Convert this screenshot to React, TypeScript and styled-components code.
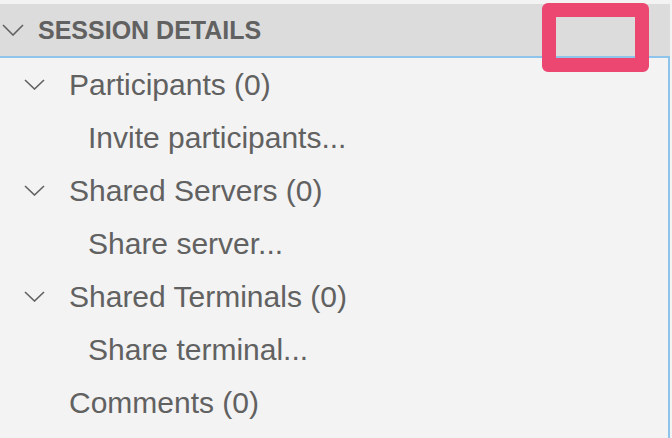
import React from "react";
import styled, { createGlobalStyle } from "styled-components";

const GlobalStyle = createGlobalStyle`
  html, body {
    margin: 0;
    padding: 0;
    background: #f3f3f3;
  }
  body {
    font-family: "Liberation Sans", Arial, sans-serif;
    color: #616161;
  }
`;

const Page = styled.div`
  position: relative;
  width: 670px;
  height: 438px;
  padding-top: 4px;
  box-sizing: border-box;
  display: flex;
  flex-direction: column;
  background: #f3f3f3;
  overflow: hidden;
`;

const Header = styled.div`
  height: 52px;
  flex: none;
  display: flex;
  align-items: center;
  gap: 14px;
  padding-left: 2px;
  background: #dcdcdc;
`;

const HeaderTitle = styled.span`
  font-size: 25px;
  font-weight: 700;
  color: #616161;
  letter-spacing: 0;
  line-height: 1;
`;

const List = styled.div`
  flex: 1;
  display: flex;
  flex-direction: column;
  border-top: 2px solid #8ec3ea;
  border-right: 2px solid #8ec3ea;
`;

const Row = styled.div<{ $indent: number }>`
  height: 53px;
  flex: none;
  display: flex;
  align-items: center;
  padding-left: ${(p) => p.$indent}px;
`;

const Twistie = styled.span`
  width: 45px;
  flex: none;
  display: flex;
  align-items: center;
`;

const Label = styled.span`
  font-size: 30px;
  line-height: 1;
  color: #616161;
  white-space: nowrap;
`;

const Highlight = styled.div`
  position: absolute;
  left: 542px;
  top: 3px;
  width: 107px;
  height: 69px;
  box-sizing: border-box;
  border: 14px solid #ec4771;
  border-radius: 6px;
`;

const Chevron = ({ w, h }: { w: number; h: number }) => (
  <svg width={w} height={h} viewBox={`0 0 ${w} ${h}`} fill="none">
    <polyline
      points={`1,1 ${w / 2},${h - 1} ${w - 1},1`}
      stroke="#616161"
      strokeWidth="1.6"
      strokeLinejoin="miter"
    />
  </svg>
);

type Item = { label: string; kind: "group" | "leaf" | "plain" };

const items: Item[] = [
  { label: "Participants (0)", kind: "group" },
  { label: "Invite participants...", kind: "leaf" },
  { label: "Shared Servers (0)", kind: "group" },
  { label: "Share server...", kind: "leaf" },
  { label: "Shared Terminals (0)", kind: "group" },
  { label: "Share terminal...", kind: "leaf" },
  { label: "Comments (0)", kind: "plain" },
];

export default function App() {
  return (
    <>
      <GlobalStyle />
      <Page>
        <Header>
          <Chevron w={22} h={12} />
          <HeaderTitle>SESSION DETAILS</HeaderTitle>
        </Header>
        <List>
          {items.map((it) => (
            <Row key={it.label} $indent={it.kind === "leaf" ? 43 : 24}>
              <Twistie>{it.kind === "group" && <Chevron w={21} h={11} />}</Twistie>
              <Label>{it.label}</Label>
            </Row>
          ))}
        </List>
        <Highlight />
      </Page>
    </>
  );
}
